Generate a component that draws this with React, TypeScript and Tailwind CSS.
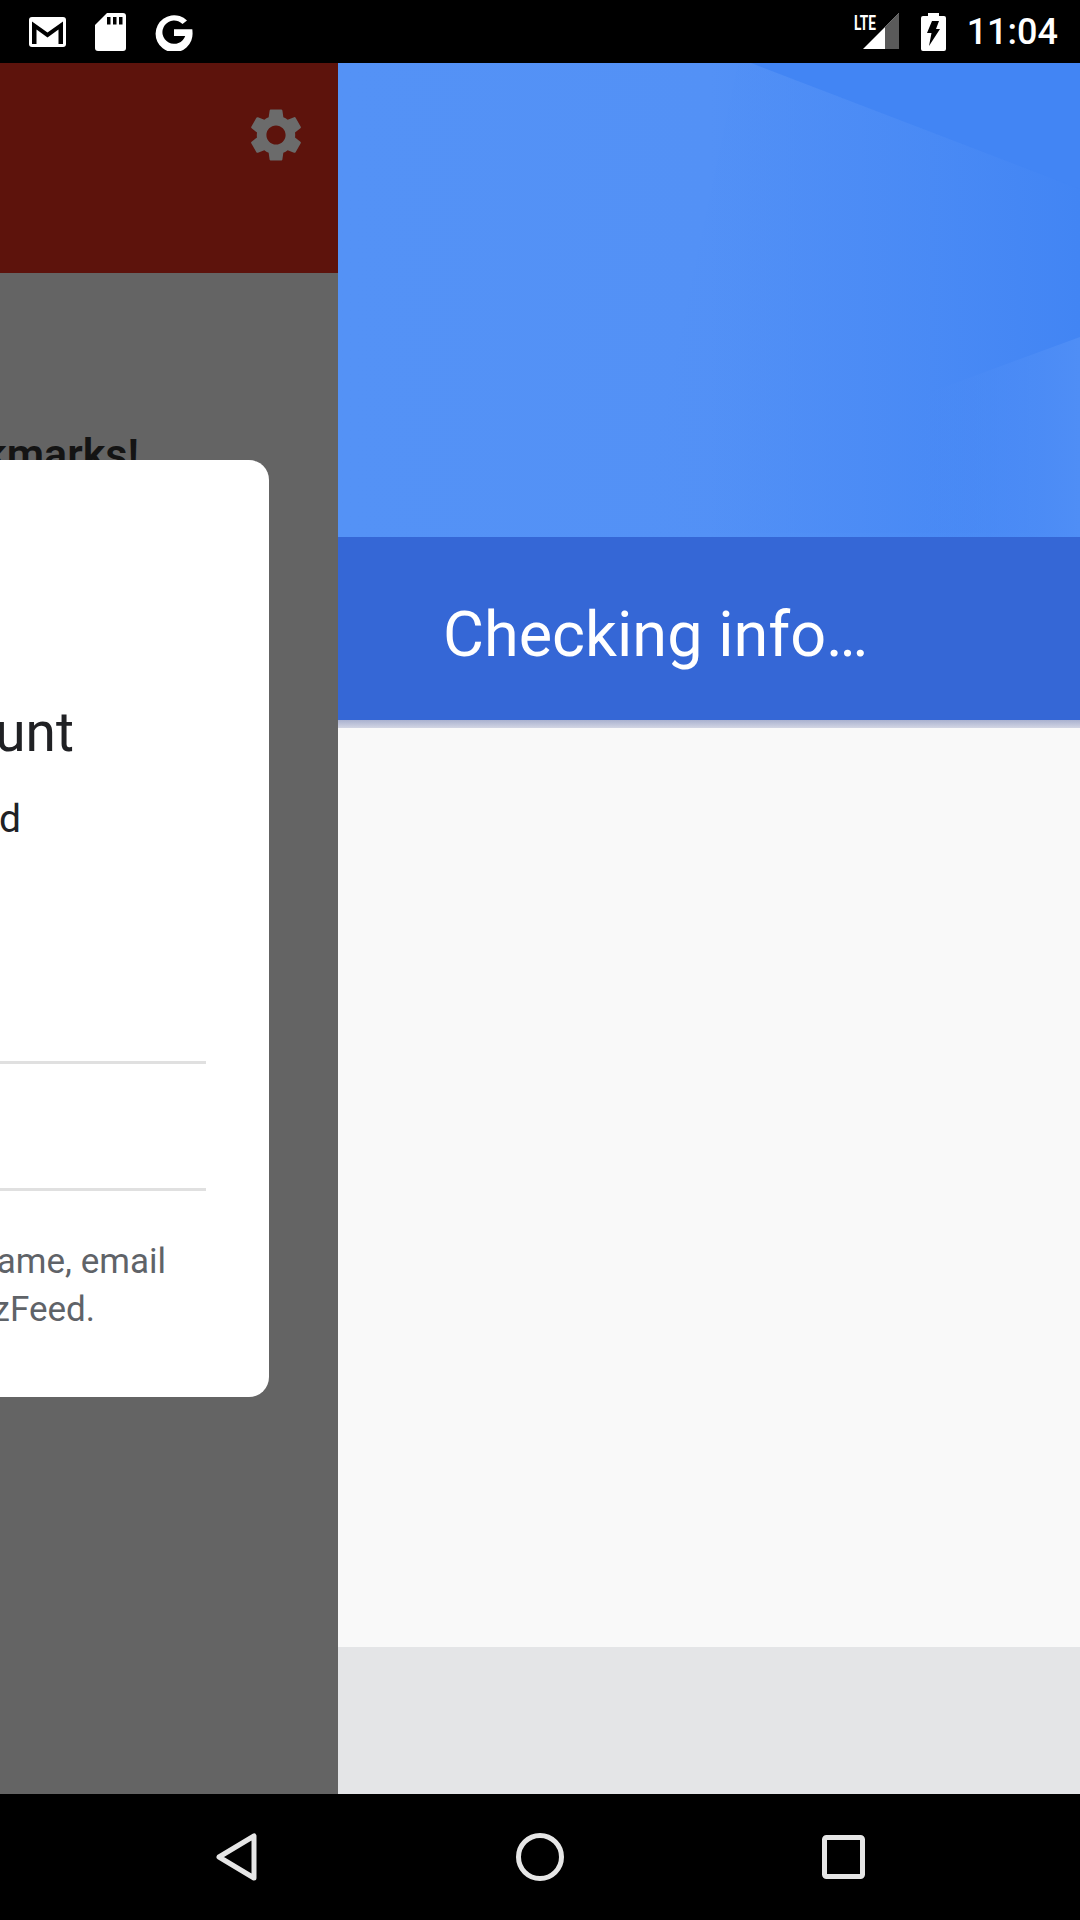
import { MdSettings } from 'react-icons/md'

const roboto = { fontFamily: 'Roboto, sans-serif' }

function StatusBar() {
  return (
    <div className="h-[63px] bg-black flex items-center justify-between pl-[29px] pr-[22px]" style={roboto}>
      <div className="flex items-center">
        <svg width="37" height="30" viewBox="0 0 37 30" className="mr-[29px]">
          <rect x="0" y="0" width="37" height="30" rx="3" fill="#fff" />
          <path d="M3 27V4.500l15.500 11L34 4.500V27h-4.500V12.500L18.500 20.500 7.500 12.500V27z" fill="#000" />
        </svg>
        <svg width="31" height="38" viewBox="0 0 31 38" className="mr-[29px]">
          <path d="M12 0h16a3 3 0 0 1 3 3v32a3 3 0 0 1-3 3H3a3 3 0 0 1-3-3V12z" fill="#fff" />
          <path d="M12 4h3.500v7.500H12zM18 4h3.500v7.500H18zM24 4h3.500v7.500H24z" fill="#000" />
        </svg>
        <svg width="38" height="38" viewBox="0 0 38 38">
          <path
            d="M32 7.500A18.500 18.500 0 1 0 37.500 19c0-.9-.1-1.800-.2-2.700H19v6.600h11.200A11.700 11.700 0 1 1 27.500 11z"
            fill="#fff"
          />
        </svg>
      </div>
      <div className="flex items-center">
        <div className="relative w-[45px] h-[38px] mr-[22px]">
          <svg width="36" height="36" viewBox="0 0 36 36" className="absolute right-0 top-0">
            <path d="M36 0v36H0z" fill="#fff" />
            <path d="M22 14L36 0v36H22z" fill="#5a5a5a" />
          </svg>
          <span className="absolute left-0 top-[-1px] text-[21px] leading-[22px] font-bold text-white origin-left scale-x-[.65]">
            LTE
          </span>
        </div>
        <svg width="25" height="38" viewBox="0 0 25 38" className="mr-[21px]">
          <path d="M7 0h11v3h5a2 2 0 0 1 2 2v31a2 2 0 0 1-2 2H2a2 2 0 0 1-2-2V5a2 2 0 0 1 2-2h5z" fill="#fff" />
          <path d="M11 8h7l-3 8h4L8 33l2.500-13H6z" fill="#000" />
        </svg>
        <span className="text-[36px] leading-none font-medium text-white">11:04</span>
      </div>
    </div>
  )
}

function DimmedPage() {
  return (
    <div className="w-[338px] shrink-0 flex flex-col overflow-hidden" style={roboto}>
      <div className="h-[210px] bg-[#5d130c] flex justify-end pt-[40px] pr-[30px]">
        <MdSettings size={64} className="text-[#6b6b6b]" />
      </div>
      <div className="relative flex-1 bg-[#646464]">
        <div className="flex justify-end pt-[156px] pr-[199px] whitespace-nowrap text-[43px] leading-[50px] font-semibold text-[#141414]">
          Save your bookmarks!
        </div>

        <div className="absolute right-[69px] top-[187px] w-[900px] h-[937px] bg-white rounded-[20px] flex flex-col items-end whitespace-nowrap">
          <div className="mt-[240px] mr-[195px] text-[55px] leading-[64px] text-[#202124]">Choose an account</div>
          <div className="mt-[30px] mr-[248px] text-[39px] leading-[50px] text-[#202124]">to continue to BuzzFeed</div>
          <div className="mt-[217px] mr-[63px] w-[600px] h-[3px] bg-[#e0e0e0]" />
          <div className="mt-[124px] mr-[63px] w-[600px] h-[3px] bg-[#e0e0e0]" />
          <div className="mt-[47px] mr-[103px] text-[35px] leading-[48px] text-[#5f6368]">
            To continue, Google will share your name, email
          </div>
          <div className="mr-[174px] text-[35px] leading-[48px] text-[#5f6368]">address and profile picture with BuzzFeed.</div>
        </div>
      </div>
    </div>
  )
}

function SignInPanel() {
  return (
    <div className="flex-1 flex flex-col" style={roboto}>
      <div className="relative h-[474px] bg-gradient-to-r from-[#5492f6] via-[#5391f6] to-[#4487f5] overflow-hidden">
        <svg width="742" height="474" viewBox="0 0 742 474" className="absolute inset-0">
          <defs>
            <linearGradient id="fade" x1="0" x2="1" y1="0" y2="0">
              <stop offset="0" stopColor="#5391f6" stopOpacity="0" />
              <stop offset="0.55" stopColor="#4b8bf5" stopOpacity="0.7" />
              <stop offset="1" stopColor="#4285f4" />
            </linearGradient>
            <linearGradient id="light" x1="0" x2="1" y1="0" y2="0">
              <stop offset="0" stopColor="#4a8af5" stopOpacity="0" />
              <stop offset="1" stopColor="#4f8ef6" />
            </linearGradient>
          </defs>
          <path d="M400 0H742V470H300z" fill="url(#fade)" />
          <path d="M413 0H742V126z" fill="#4285f4" />
          <path d="M742 274L590 330 560 474H742z" fill="url(#light)" />
        </svg>
      </div>
      <div className="h-[183px] bg-[#3567d6] flex items-center pl-[105px] pt-[11px]">
        <span className="text-[63px] leading-none text-white">Checking info…</span>
      </div>
      <div className="h-[8px] bg-gradient-to-b from-[#a9b1cf] to-[#d2d5e3]" />
      <div className="flex-1 bg-[#f9f9f9]" />
      <div className="h-[147px] bg-[#e4e5e7]" />
    </div>
  )
}

function NavBar() {
  return (
    <div className="h-[126px] bg-black flex items-center justify-between pl-[216px] pr-[215px]">
      <svg width="41" height="48" viewBox="0 0 41 48">
        <path d="M38 3v42L3 24z" fill="none" stroke="#e6e6e6" strokeWidth="5" strokeLinejoin="round" />
      </svg>
      <svg width="48" height="48" viewBox="0 0 48 48">
        <circle cx="24" cy="24" r="21.500" fill="none" stroke="#e6e6e6" strokeWidth="5" />
      </svg>
      <svg width="43" height="44" viewBox="0 0 43 44">
        <rect x="2.500" y="2.500" width="38" height="39" rx="2" fill="none" stroke="#e6e6e6" strokeWidth="5" />
      </svg>
    </div>
  )
}

export default function App() {
  return (
    <div className="w-[1080px] h-[1920px] flex flex-col overflow-hidden">
      <StatusBar />
      <div className="flex-1 flex min-h-0">
        <DimmedPage />
        <SignInPanel />
      </div>
      <NavBar />
    </div>
  )
}
